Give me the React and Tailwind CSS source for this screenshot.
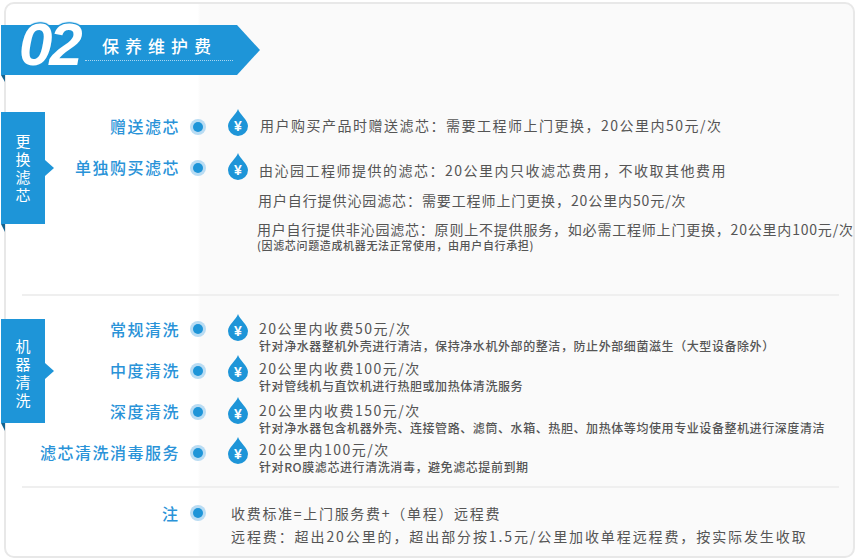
const cjk = "font-['Noto_Sans_CJK_SC','Noto_Sans',sans-serif]";

function Drop() {
  return (
    <svg width="20" height="27" viewBox="0 0 20 27" className="block shrink-0">
      <path d="M10 0C11.5 5.5 20 10.5 20 17A10 10 0 0 1 0 17C0 10.5 8.5 5.5 10 0Z" fill="#1e95d8" />
      <text x="10" y="21.5" textAnchor="middle" fontSize="14" fontWeight="700" fill="#fff" fontFamily="Liberation Sans">¥</text>
    </svg>
  );
}

function Dot() {
  return (
    <div className="w-4 h-4 rounded-full bg-[#b9dcf3] flex items-center justify-center shrink-0">
      <div className="w-[10px] h-[10px] rounded-full bg-[#1e95d8]"></div>
    </div>
  );
}

function Tab({ chars, height, mt, textTop }) {
  return (
    <div className={`w-[53px] shrink-0 -ml-[5px] relative ${mt} ${height}`}>
      <div className={`w-11 h-full bg-[#1e95d8] flex flex-col items-center text-white text-[15px] leading-[18px] ${textTop}`}>
        {chars.map((c) => <span key={c}>{c}</span>)}
      </div>
      <div className="absolute left-11 top-1/2 -mt-2 w-0 h-0 border-y-8 border-y-transparent border-l-[9px] border-l-[#1e95d8]"></div>
      <div className="absolute left-0 top-full w-[4px] h-2 bg-[#14638f] [clip-path:polygon(0_0,100%_0,100%_100%)]"></div>
    </div>
  );
}

function Row({ label, h, labelCls = "mt-[7px]", dotCls = "mt-[10px]", children }) {
  return (
    <div className={`flex items-start ${h}`}>
      <div className={`w-[126px] text-right text-[16px] leading-5 tracking-[1.5px] font-medium text-[#2a93d8] whitespace-nowrap flex justify-end shrink-0 ${labelCls}`}>{label}</div>
      <div className={`ml-[10px] ${dotCls}`}><Dot /></div>
      <div className="ml-[22px]"><Drop /></div>
      <div className="ml-[11px] text-[#555] whitespace-nowrap">{children}</div>
    </div>
  );
}

function Main({ cls, children }) {
  return <p className={`text-[14px] leading-5 ${cls}`}>{children}</p>;
}

function Sub({ children }) {
  return <p className="text-[12px] leading-4 tracking-[0.58px] font-medium">{children}</p>;
}

export default function App() {
  return (
    <div className={`w-[859px] h-[560px] pt-[2px] pl-[4px] bg-white overflow-hidden ${cjk}`}>
      <div className="w-[851px] h-[556px] rounded-[10px] border-2 border-[#e8e8e8] bg-[linear-gradient(90deg,#ffffff_192px,#fafafa_194px)]">

        <div className="-ml-[5px] mt-[21px] relative w-[259px] h-[50px] bg-[#1e95d8] [clip-path:polygon(0_0,236px_0,259px_50%,236px_100%,0_100%)] flex items-start">
          <div className="ml-[101px] mt-[9px] pb-[1px] text-white text-[17px] leading-6 tracking-[6px] font-medium">保养维护费</div>
          <div className="absolute left-[84px] w-[148px] top-[35px] border-t border-dotted border-[#a9d6f0]"></div>
        </div>
        <div className="relative h-0 -mt-[50px] mb-[50px]">
          <div className="absolute left-[13px] -top-[15px] font-['Liberation_Sans',sans-serif] italic font-bold text-[60px] tracking-[-3px] leading-[70px] text-white [text-shadow:0_-1px_1px_#1e95d8,1px_-1px_1px_#1e95d8,-1px_-1px_1px_#1e95d8]">02</div>
        </div>
        <div className="h-[5px] -ml-[5px]">
          <div className="w-[4px] h-[7px] bg-[#14638f] [clip-path:polygon(0_0,100%_0,100%_100%)]"></div>
        </div>

        <div className="flex mt-[29px] h-[185px]">
          <Tab chars={["更", "换", "滤", "芯"]} height="h-[112px]" mt="mt-[3px]" textTop="pt-[20px]" />
          <div className="flex-1">
            <Row label="赠送滤芯" h="h-[44px]">
              <div className="mt-[6px] ml-[1px]"><Main cls="tracking-[1.5px]">用户购买产品时赠送滤芯：需要工程师上门更换，20公里内50元/次</Main></div>
            </Row>
            <Row label="单独购买滤芯" h="h-[141px]" labelCls="mt-[4px]" dotCls="mt-[7px]">
              <div className="mt-[7px]">
                <Main cls="tracking-[1.5px]">由沁园工程师提供的滤芯：20公里内只收滤芯费用，不收取其他费用</Main>
                <div className="mt-[10px] -ml-[1px]"><Main cls="tracking-[0.9px]">用户自行提供沁园滤芯：需要工程师上门更换，20公里内50元/次</Main></div>
                <div className="mt-[9px] -ml-[2px]"><Main cls="tracking-[0.8px]">用户自行提供非沁园滤芯：原则上不提供服务，如必需工程师上门更换，20公里内100元/次</Main></div>
                <p className="text-[11px] leading-4 tracking-[0.65px] font-medium -ml-[2px] -mt-[2px]">(因滤芯问题造成机器无法正常使用，由用户自行承担)</p>
              </div>
            </Row>
          </div>
        </div>

        <div className="ml-[16px] mr-[14px] border-t-2 border-[#efefef]"></div>

        <div className="flex mt-[18px] h-[172px]">
          <Tab chars={["机", "器", "清", "洗"]} height="h-[104px]" mt="mt-[5px]" textTop="pt-[18px]" />
          <div className="flex-1">
            <Row label="常规清洗" h="h-[41px]" labelCls="mt-[5px]" dotCls="mt-[7px]">
              <Main cls="tracking-[1.5px] mt-[4px]">20公里内收费50元/次</Main>
              <Sub>针对净水器整机外壳进行清洁，保持净水机外部的整洁，防止外部细菌滋生（大型设备除外）</Sub>
            </Row>
            <Row label="中度清洗" h="h-[42px]" labelCls="mt-[5px]" dotCls="mt-[8px]">
              <Main cls="tracking-[1.5px] mt-[3px]">20公里内收费100元/次</Main>
              <Sub>针对管线机与直饮机进行热胆或加热体清洗服务</Sub>
            </Row>
            <Row label="深度清洗" h="h-[40px]" labelCls="mt-[4px]" dotCls="mt-[7px]">
              <Main cls="tracking-[1.5px] mt-[3px]">20公里内收费150元/次</Main>
              <Sub>针对净水器包含机器外壳、连接管路、滤筒、水箱、热胆、加热体等均使用专业设备整机进行深度清洁</Sub>
            </Row>
            <Row label="滤芯清洗消毒服务" h="h-[40px]" labelCls="mt-[5px]" dotCls="mt-[8px]">
              <Main cls="tracking-[1.5px] mt-[2px]">20公里内100元/次</Main>
              <Sub>针对RO膜滤芯进行清洗消毒，避免滤芯提前到期</Sub>
            </Row>
          </div>
        </div>

        <div className="ml-[16px] mr-[14px] border-t-2 border-[#efefef]"></div>

        <div className="flex mt-[16px] pl-[39px]">
          <div className="w-[133px] -mt-[1px] h-5 text-right text-[16px] leading-5 font-medium text-[#2a93d8]">注</div>
          <div className="ml-[12px] mt-[1px]"><Dot /></div>
          <div className="ml-[26px] -mt-[2px] text-[#555] whitespace-nowrap text-[14px] leading-[23px] -translate-x-px">
            <p className="tracking-[1.7px]">收费标准=上门服务费+（单程）远程费</p>
            <p className="tracking-[1.9px]">远程费：超出20公里的，超出部分按1.5元/公里加收单程远程费，按实际发生收取</p>
          </div>
        </div>
      </div>
    </div>
  );
}
